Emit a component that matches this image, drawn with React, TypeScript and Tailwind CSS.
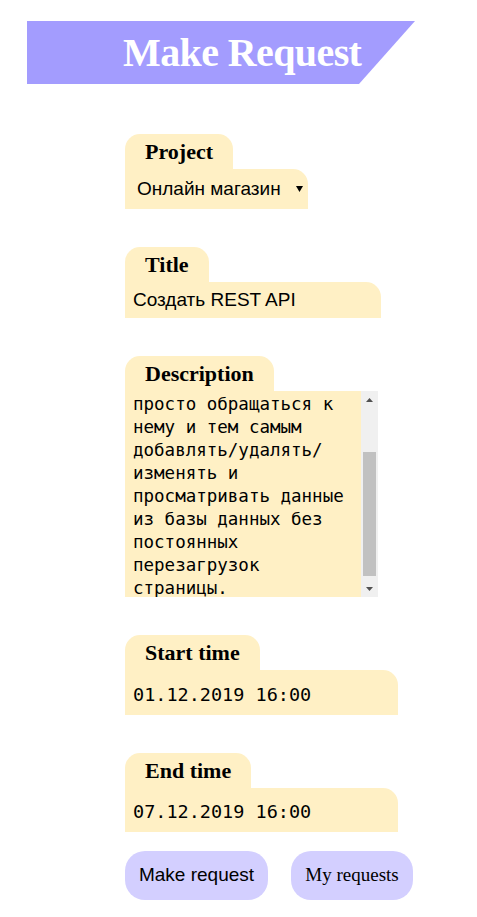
import { useEffect, useRef } from "react";

const description =
  "Нужно создать API, чтобы клиентская часть сайта могла просто обращаться к нему и тем самым добавлять/удалять/изменять и просматривать данные из базы данных без постоянных перезагрузок страницы.";

function Field({ label, children }: { label: string; children: React.ReactNode }) {
  return (
    <div className="flex flex-col items-start">
      <div className="flex h-[35px] items-center rounded-t-[15px] bg-[#fff0c5] px-5 font-['Liberation_Serif',serif] text-[22px] font-bold text-black">
        {label}
      </div>
      {children}
    </div>
  );
}

// classic scrollbar look, drawn beside the textarea
function ScrollTrack() {
  return (
    <div className="flex h-[206px] w-[17px] flex-col bg-[#f0f0f0]">
      <div className="flex h-[17px] items-center justify-center">
        <svg width="7" height="4" viewBox="0 0 7 4">
          <polygon points="0,4 7,4 3.5,0" fill="#505050" />
        </svg>
      </div>
      <div className="flex-1 px-[2px] pt-[44px] pb-[4px]">
        <div className="h-full bg-[#c1c1c1]" />
      </div>
      <div className="flex h-[17px] items-center justify-center">
        <svg width="7" height="4" viewBox="0 0 7 4">
          <polygon points="0,0 7,0 3.5,4" fill="#505050" />
        </svg>
      </div>
    </div>
  );
}

export default function App() {
  const areaRef = useRef<HTMLTextAreaElement>(null);

  useEffect(() => {
    const el = areaRef.current;
    if (el) el.scrollTop = el.scrollHeight - el.clientHeight - 3;
  }, []);

  return (
    <div className="min-h-screen bg-white pt-[21px]">
      <div className="ml-[27px] flex h-[63px] w-[388px] items-center bg-[#a39cfe] pl-[96px] font-['Liberation_Serif',serif] text-[40px] font-bold tracking-[-0.6px] text-white [clip-path:polygon(0_0,100%_0,calc(100%-56px)_100%,0_100%)]">
        Make Request
      </div>

      <form className="ml-[125px] mt-[50px] flex flex-col" onSubmit={e => e.preventDefault()}>
        <div className="flex flex-col gap-[38px]">
          <Field label="Project">
            <div className="relative">
              <select
                defaultValue="shop"
                className="h-[40px] w-[183px] appearance-none rounded-tr-[15px] bg-[#fff0c5] pl-3 font-['Liberation_Sans',sans-serif] text-[19px] text-black outline-none"
              >
                <option value="shop">Онлайн магазин</option>
              </select>
              <svg className="pointer-events-none absolute right-[5px] top-[17px]" width="7" height="6" viewBox="0 0 7 6">
                <polygon points="0,0 7,0 3.5,6" fill="#000" />
              </svg>
            </div>
          </Field>

          <Field label="Title">
            <input
              defaultValue="Создать REST API"
              className="h-[36px] w-[256px] rounded-tr-[15px] bg-[#fff0c5] pl-2 font-['Liberation_Sans',sans-serif] text-[19px] text-black outline-none"
            />
          </Field>

          <Field label="Description">
            <div className="flex">
              <textarea
                ref={areaRef}
                defaultValue={description}
                className="block h-[206px] w-[236px] resize-none overflow-hidden bg-[#fff0c5] px-2 py-0 font-['DejaVu_Sans_Mono',monospace] text-[17.5px] leading-[23px] text-black outline-none"
              />
              <ScrollTrack />
            </div>
          </Field>

          <Field label="Start time">
            <input
              defaultValue="01.12.2019 16:00"
              className="h-[45px] w-[273px] rounded-tr-[15px] bg-[#fff0c5] pl-2 pt-[3px] font-['DejaVu_Sans_Mono',monospace] text-[18.5px] text-black outline-none"
            />
          </Field>

          <Field label="End time">
            <input
              defaultValue="07.12.2019 16:00"
              className="h-[44px] w-[273px] rounded-tr-[15px] bg-[#fff0c5] pl-2 pt-[3px] font-['DejaVu_Sans_Mono',monospace] text-[18.5px] text-black outline-none"
            />
          </Field>
        </div>

        <div className="mt-[19px] flex gap-[23px]">
          <button className="h-[49px] w-[143px] rounded-[20px] bg-[#d3cfff] font-['Liberation_Sans',sans-serif] text-[19px] text-black">
            Make request
          </button>
          <button type="button" className="h-[49px] w-[122px] rounded-[20px] bg-[#d3cfff] font-['Liberation_Serif',serif] text-[19px] text-black">
            My requests
          </button>
        </div>
      </form>
    </div>
  );
}
